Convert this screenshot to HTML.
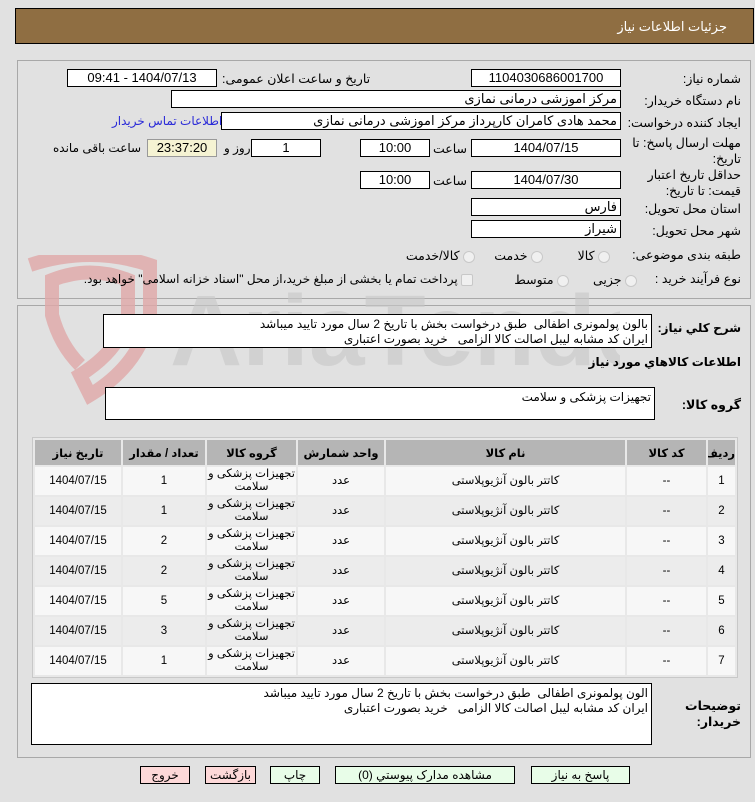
<!DOCTYPE html>
<html><head><meta charset="utf-8"><style>
*{box-sizing:border-box;margin:0;padding:0}
body{width:755px;height:802px;background:#e1e1e1;font-family:"Liberation Sans","DejaVu Sans",sans-serif;font-size:12px;color:#000;position:relative;overflow:hidden;direction:rtl}
.a{position:absolute;white-space:nowrap}
.in{position:absolute;background:#fff;border:1px solid #000;height:18px;line-height:16px;text-align:center;font-size:13px}
.tl{position:absolute;background:#fff;border:1px solid #000;text-align:right;padding:2px 3px;font-size:12px;line-height:15px}
.lb{position:absolute;font-size:12.5px;white-space:nowrap;text-align:right}
.pn{position:absolute;border:1px solid #a8a8a8}
table{position:absolute;border-collapse:separate;border-spacing:2px;background:#e8e8e8;border:1px solid #c8c8c8;table-layout:fixed}
td,th{text-align:center;font-size:11.5px;padding:0;overflow:hidden}
th{background:#b5b5b5;height:25px;font-weight:bold}
td{height:28px;line-height:13px}
tr.o td{background:#f7f7f7}tr.e td{background:#ececec}
.btn{position:absolute;top:766px;height:18px;border:1px solid #000;font-size:12px;text-align:center;line-height:16px}
.g{background:#e8fde8}.p{background:#fdd8d8}
.rad{display:inline-block;width:12px;height:12px;border-radius:50%;border:1px solid #c8c8c8;background:#f0f0f0;vertical-align:middle}
</style></head><body>
<div class="a" style="left:15px;top:8px;width:739px;height:36px;background:#8f6e42;border:1px solid #000"></div>
<div class="a" style="right:28px;top:19px;color:#fff;font-size:13px">جزئیات اطلاعات نیاز</div>

<div class="pn" style="left:17px;top:60px;width:734px;height:239px"></div>
<div class="pn" style="left:17px;top:305px;width:734px;height:453px"></div>

<svg class="a" style="left:20px;top:255px" width="600" height="150" viewBox="0 0 600 150">
<path d="M10 10 Q70 -10 130 10 L130 60 Q120 110 70 140 L60 120 Q100 95 108 60 L108 25 Q70 10 32 25 L32 60 Q40 90 60 110" fill="none" stroke="#e0a8a8" stroke-width="14" opacity="0.8"/>
<text x="150" y="110" font-family="Liberation Sans" font-weight="bold" font-size="100" fill="#c8c8c8" opacity="0.6" direction="ltr">AriaTender.neT</text>
</svg>

<div class="lb" style="right:14px;top:71px">شماره نیاز:</div>
<div class="in" style="left:471px;top:69px;width:150px">1104030686001700</div>
<div class="lb" style="left:222px;top:71px">تاریخ و ساعت اعلان عمومی:</div>
<div class="in" style="left:67px;top:69px;width:150px">1404/07/13 - 09:41</div>

<div class="lb" style="right:14px;top:93px">نام دستگاه خریدار:</div>
<div class="in" style="left:171px;top:90px;width:450px;text-align:right;padding-right:3px">مرکز اموزشی درمانی نمازی</div>

<div class="lb" style="right:14px;top:115px">ایجاد کننده درخواست:</div>
<div class="in" style="left:221px;top:112px;width:400px;text-align:right;padding-right:3px">محمد هادی کامران کارپرداز مرکز اموزشی درمانی نمازی</div>
<div class="lb" style="left:112px;top:114px;color:#2a2ad8;font-size:12px">اطلاعات تماس خریدار</div>

<div class="lb" style="right:14px;top:135px;line-height:16px">مهلت ارسال پاسخ: تا<br>تاریخ:</div>
<div class="in" style="left:471px;top:139px;width:150px">1404/07/15</div>
<div class="lb" style="left:433px;top:141px">ساعت</div>
<div class="in" style="left:360px;top:139px;width:70px">10:00</div>
<div class="in" style="left:251px;top:139px;width:70px">1</div>
<div class="lb" style="left:224px;top:141px;font-size:12px">روز و</div>
<div class="in" style="left:147px;top:139px;width:70px;background:#f5f3d3;border-color:#999">23:37:20</div>
<div class="lb" style="left:53px;top:141px;font-size:12px">ساعت باقی مانده</div>

<div class="lb" style="right:14px;top:167px;line-height:16px">حداقل تاریخ اعتبار<br>قیمت: تا تاریخ:</div>
<div class="in" style="left:471px;top:171px;width:150px">1404/07/30</div>
<div class="lb" style="left:433px;top:173px">ساعت</div>
<div class="in" style="left:360px;top:171px;width:70px">10:00</div>

<div class="lb" style="right:14px;top:201px">استان محل تحویل:</div>
<div class="in" style="left:471px;top:198px;width:150px;text-align:right;padding-right:3px">فارس</div>
<div class="lb" style="right:14px;top:223px">شهر محل تحویل:</div>
<div class="in" style="left:471px;top:220px;width:150px;text-align:right;padding-right:3px">شیراز</div>

<div class="lb" style="right:14px;top:247px">طبقه بندی موضوعی:</div>
<div class="lb" style="right:145px;top:248px"><span class="rad"></span> کالا</div>
<div class="lb" style="right:212px;top:248px"><span class="rad"></span> خدمت</div>
<div class="lb" style="right:280px;top:248px"><span class="rad"></span> کالا/خدمت</div>

<div class="lb" style="right:14px;top:271px">نوع فرآیند خرید :</div>
<div class="lb" style="right:118px;top:272px"><span class="rad"></span> جزیی</div>
<div class="lb" style="right:186px;top:272px"><span class="rad"></span> متوسط</div>
<div class="lb" style="right:282px;top:272px;font-size:12px"><span class="rad" style="border-radius:2px"></span> پرداخت تمام یا بخشی از مبلغ خرید،از محل "اسناد خزانه اسلامی" خواهد بود.</div>

<div class="lb" style="right:14px;top:321px;font-weight:bold;font-size:12px">شرح کلي نیاز:</div>
<div class="tl" style="left:103px;top:314px;width:549px;height:34px">بالون پولمونری اطفالی &nbsp;طبق درخواست بخش با تاریخ 2 سال مورد تایید میباشد<br>ایران کد مشابه لیبل اصالت کالا الزامی &nbsp; خرید بصورت اعتباری</div>

<div class="lb" style="right:14px;top:355px;font-weight:bold;font-size:12px">اطلاعات کالاهاي مورد نیاز</div>
<div class="lb" style="right:14px;top:397px;font-weight:bold">گروه کالا:</div>
<div class="tl" style="left:105px;top:387px;width:550px;height:33px">تجهیزات پزشکی و سلامت</div>

<table style="left:32px;top:437px;width:706px">
<colgroup><col style="width:27px"><col style="width:79px"><col style="width:239px"><col style="width:86px"><col style="width:89px"><col style="width:82px"><col></colgroup>
<tr><th>ردیف</th><th>کد کالا</th><th>نام کالا</th><th>واحد شمارش</th><th>گروه کالا</th><th>تعداد / مقدار</th><th>تاریخ نیاز</th></tr>
<tr class="o"><td>1</td><td>--</td><td>کاتتر بالون آنژیوپلاستی</td><td>عدد</td><td>تجهیزات پزشکی و<br>سلامت</td><td>1</td><td>1404/07/15</td></tr>
<tr class="e"><td>2</td><td>--</td><td>کاتتر بالون آنژیوپلاستی</td><td>عدد</td><td>تجهیزات پزشکی و<br>سلامت</td><td>1</td><td>1404/07/15</td></tr>
<tr class="o"><td>3</td><td>--</td><td>کاتتر بالون آنژیوپلاستی</td><td>عدد</td><td>تجهیزات پزشکی و<br>سلامت</td><td>2</td><td>1404/07/15</td></tr>
<tr class="e"><td>4</td><td>--</td><td>کاتتر بالون آنژیوپلاستی</td><td>عدد</td><td>تجهیزات پزشکی و<br>سلامت</td><td>2</td><td>1404/07/15</td></tr>
<tr class="o"><td>5</td><td>--</td><td>کاتتر بالون آنژیوپلاستی</td><td>عدد</td><td>تجهیزات پزشکی و<br>سلامت</td><td>5</td><td>1404/07/15</td></tr>
<tr class="e"><td>6</td><td>--</td><td>کاتتر بالون آنژیوپلاستی</td><td>عدد</td><td>تجهیزات پزشکی و<br>سلامت</td><td>3</td><td>1404/07/15</td></tr>
<tr class="o"><td>7</td><td>--</td><td>کاتتر بالون آنژیوپلاستی</td><td>عدد</td><td>تجهیزات پزشکی و<br>سلامت</td><td>1</td><td>1404/07/15</td></tr>
</table>

<div class="lb" style="right:14px;top:698px;font-weight:bold;line-height:16px">توضیحات<br>خریدار:</div>
<div class="tl" style="left:31px;top:683px;width:621px;height:62px">الون پولمونری اطفالی &nbsp;طبق درخواست بخش با تاریخ 2 سال مورد تایید میباشد<br>ایران کد مشابه لیبل اصالت کالا الزامی &nbsp; خرید بصورت اعتباری</div>

<div class="btn g" style="left:531px;width:99px">پاسخ به نیاز</div>
<div class="btn g" style="left:335px;width:180px">مشاهده مدارک پیوستي (0)</div>
<div class="btn g" style="left:270px;width:50px">چاپ</div>
<div class="btn p" style="left:205px;width:51px">بازگشت</div>
<div class="btn p" style="left:140px;width:50px">خروج</div>
</body></html>
